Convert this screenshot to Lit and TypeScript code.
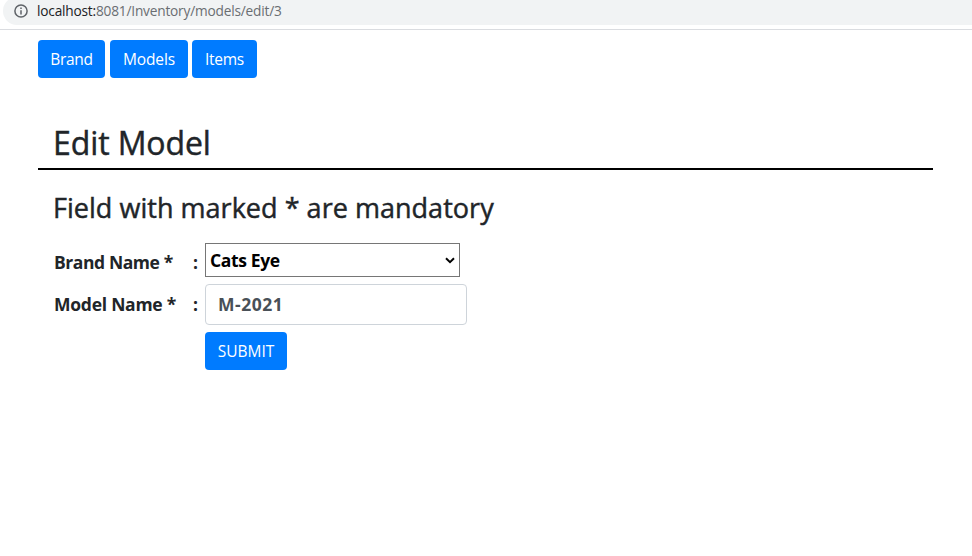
import { LitElement, html, css } from "lit";
import { customElement, property } from "lit/decorators.js";

@customElement("address-bar")
class AddressBar extends LitElement {
  static styles = css`
    :host { display: block; height: 29px; border-bottom: 1px solid #dadce0; overflow: hidden; }
    .pill { display: flex; align-items: center; height: 28px; margin: -3px 0 0 3px; padding-left: 11px;
      background: #f1f3f4; border-radius: 14px 0 0 14px; box-sizing: border-box; }
    .icon { width: 14px; height: 14px; flex: none; }
    .url { margin-left: 9px; font-size: 13.7px; line-height: 20px; color: #6a6e72; white-space: pre; letter-spacing: -0.2px; }
    .host { color: #202124; }
  `;
  render() {
    return html`<div class="pill">
      <svg class="icon" viewBox="0 0 14 14" fill="none" stroke="#5f6368" stroke-width="1.5">
        <circle cx="7" cy="7" r="6.1"></circle>
        <path d="M7 6.2V10.4M7 3.5V5"></path>
      </svg>
      <span class="url"><span class="host">localhost:</span>8081/Inventory/models/edit/3</span>
    </div>`;
  }
}

@customElement("app-root")
class AppRoot extends LitElement {
  @property() model = "M-2021";

  static styles = css`
    :host { display: block; height: 556px; background: #fff; color: #212529; overflow: hidden;
      font-family: "Segoe UI", "Open Sans", sans-serif; }
    .page { margin: 10px 39px 0 38px; }
    .nav { display: flex; }
    .btn { box-sizing: border-box; height: 38px; padding: 0; border: 0; border-radius: 4px; background: #007bff;
      color: #fff; font: inherit; font-size: 15.5px; line-height: 38px; text-align: center; white-space: nowrap; }
    .brand { width: 67px; margin-right: 5px; letter-spacing: -0.3px; }
    .models { width: 78px; margin-right: 4px; letter-spacing: -0.15px; }
    .items { width: 65px; letter-spacing: -0.3px; }
    h2, h3 { margin: 0; font-weight: 500; white-space: nowrap; -webkit-text-stroke: 0.45px #212529; }
    h2 { height: 50px; margin-top: 40px; padding-left: 15px; border-bottom: 2px solid #000; font-size: 32px; line-height: 50px; letter-spacing: -0.1px; }
    h3 { margin-top: 21px; padding-left: 15px; font-size: 27px; line-height: 34px; letter-spacing: 0.03px; }
    .form { display: grid; grid-template-columns: 139px 12px auto; justify-content: start; margin: 18px 0 0 16px;
      font-size: 17.5px; font-weight: 700; row-gap: 7px; align-items: center; }
    .label, .colon { white-space: nowrap; line-height: 24px; padding-top: 4px; }
    .label { letter-spacing: -0.42px; }
    .second { padding: 0 0 1px; }
    .label.second { letter-spacing: -0.25px; }
    .select-wrap { display: flex; align-items: center; width: 255px; height: 34px; box-sizing: border-box;
      border: 1px solid #767676; color: #000; }
    select { appearance: none; flex: 1; border: 0; padding: 0 0 0 4px; background: none; color: #000;
      font: inherit; line-height: 28px; height: 32px; outline: none; letter-spacing: -0.35px; }
    .chevron { width: 10px; height: 7px; margin-right: 4px; flex: none; }
    input { box-sizing: border-box; width: 262px; height: 41px; border: 1px solid #ced4da; border-radius: 4px;
      padding: 0 12px 2px; font: inherit; color: #495057; outline: none; background: #fff; display: block; letter-spacing: 0.5px; }
    .submit { grid-column: 3; width: 82px; font-weight: 400; }
  `;
  render() {
    return html`
      <address-bar></address-bar>
      <div class="page">
        <nav class="nav">
          <button class="btn brand">Brand</button>
          <button class="btn models">Models</button>
          <button class="btn items">Items</button>
        </nav>
        <h2>Edit Model</h2>
        <h3>Field with marked * are mandatory</h3>
        <div class="form">
          <span class="label">Brand Name *</span><span class="colon">:</span>
          <div class="select-wrap">
            <select><option>Cats Eye</option></select>
            <svg class="chevron" viewBox="0 0 10 7" fill="none" stroke="#000" stroke-width="2"><path d="M1 1.3L5 5.1L9 1.3"></path></svg>
          </div>
          <span class="label second">Model Name *</span><span class="colon second">:</span>
          <input .value=${this.model} />
          <button class="btn submit">SUBMIT</button>
        </div>
      </div>
    `;
  }
}
